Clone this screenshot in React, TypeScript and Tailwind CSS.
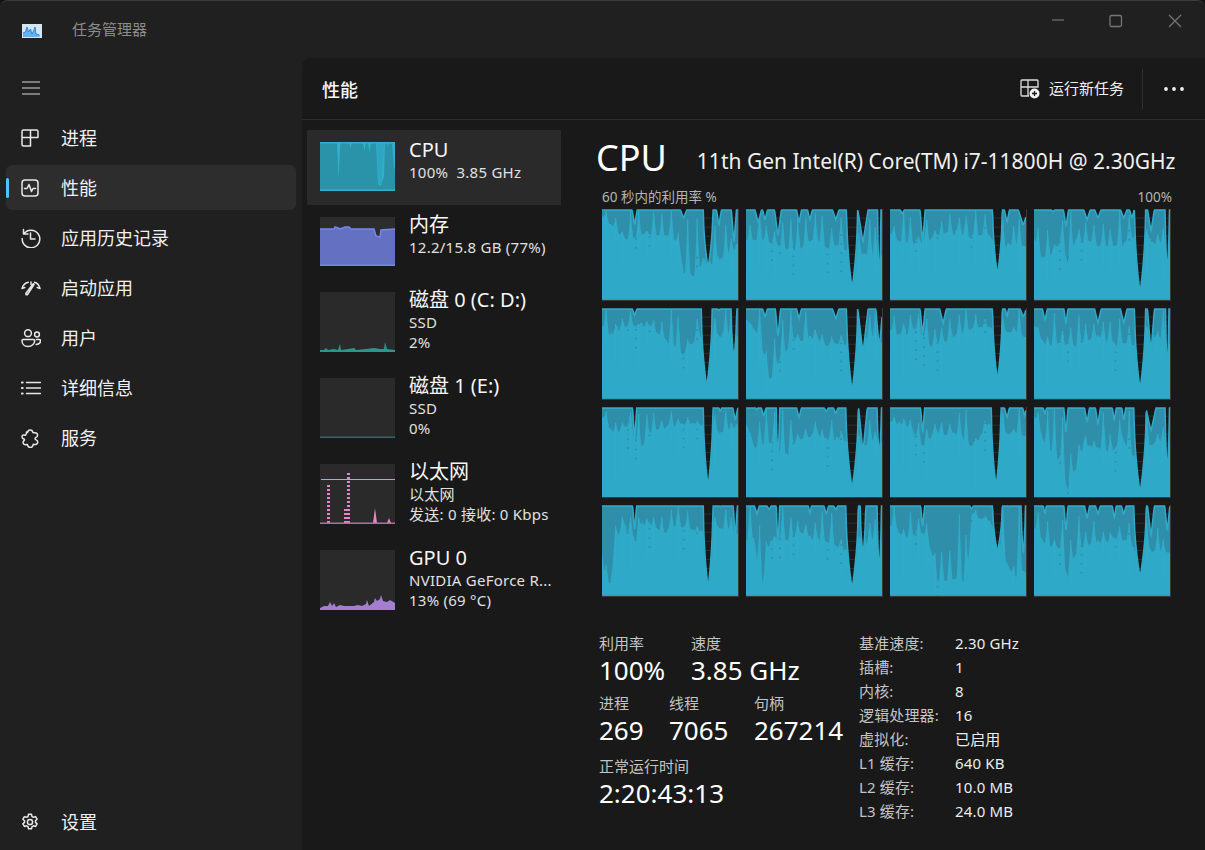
import React from "react";

type N = [number, number, number];
type P = [number, number];
type Core = { n: N[]; p: P[]; seed: number };

const cores: Core[] = [
  { seed: 1, n: [[0.24, 0.015, 0.18], [0.6, 0.02, 0.1], [0.78, 0.035, 0.65], [0.86, 0.015, 0.18], [0.97, 0.015, 0.38]], p: [[0, 0.08], [0.08, 0.2], [0.2, 0.35], [0.3, 0.28], [0.45, 0.3], [0.56, 0.35], [0.6, 0.7], [0.7, 0.75], [0.74, 0.55], [0.8, 0.6], [1, 0.4]] },
  { seed: 2, n: [[0.09, 0.02, 0.15], [0.14, 0.015, 0.12], [0.235, 0.02, 0.3], [0.39, 0.015, 0.15], [0.47, 0.015, 0.12], [0.66, 0.02, 0.12], [0.78, 0.04, 0.88], [0.86, 0.03, 0.37], [0.98, 0.012, 0.8]], p: [[0, 0.33], [0.1, 0.33], [0.25, 0.4], [0.35, 0.45], [0.5, 0.33], [0.6, 0.42], [0.7, 0.4], [0.8, 0.5], [1, 0.5]] },
  { seed: 3, n: [[0.09, 0.015, 0.05], [0.24, 0.015, 0.38], [0.79, 0.035, 0.73], [0.86, 0.015, 0.15], [0.98, 0.03, 0.18]], p: [[0, 0.25], [0.1, 0.4], [0.3, 0.32], [0.5, 0.25], [0.6, 0.3], [0.72, 0.28], [0.8, 0.4], [1, 0.4]] },
  { seed: 4, n: [[0.14, 0.015, 0.03], [0.235, 0.015, 0.2], [0.39, 0.02, 0.12], [0.47, 0.02, 0.1], [0.66, 0.02, 0.1], [0.72, 0.015, 0.1], [0.78, 0.04, 0.93], [0.86, 0.02, 0.25], [0.98, 0.015, 0.72]], p: [[0, 0.3], [0.06, 0.55], [0.1, 0.55], [0.2, 0.35], [0.25, 0.6], [0.3, 0.35], [0.5, 0.4], [0.65, 0.4], [0.72, 0.3], [0.85, 0.35], [1, 0.4]] },
  { seed: 5, n: [[0.24, 0.015, 0.08], [0.77, 0.04, 0.87], [0.86, 0.01, 0.03], [0.97, 0.02, 0.57]], p: [[0, 0.2], [0.07, 0.3], [0.15, 0.2], [0.3, 0.18], [0.36, 0.22], [0.6, 0.5], [0.72, 0.3], [0.85, 0.3], [1, 0.3]] },
  { seed: 6, n: [[0.14, 0.015, 0.1], [0.235, 0.015, 0.33], [0.39, 0.015, 0.12], [0.66, 0.02, 0.12], [0.78, 0.04, 0.92], [0.86, 0.03, 0.5], [0.98, 0.02, 0.45]], p: [[0, 0.12], [0.1, 0.3], [0.16, 0.75], [0.2, 0.8], [0.25, 0.55], [0.35, 0.35], [0.5, 0.32], [0.6, 0.42], [0.72, 0.4], [0.85, 0.3], [1, 0.4]] },
  { seed: 7, n: [[0.24, 0.015, 0.3], [0.39, 0.02, 0.17], [0.79, 0.035, 0.8], [0.86, 0.01, 0.1], [0.98, 0.02, 0.1]], p: [[0, 0.25], [0.08, 0.3], [0.2, 0.22], [0.3, 0.42], [0.4, 0.38], [0.5, 0.27], [0.7, 0.22], [0.85, 0.25], [1, 0.3]] },
  { seed: 8, n: [[0.08, 0.015, 0.14], [0.235, 0.012, 0.18], [0.47, 0.02, 0.17], [0.66, 0.02, 0.17], [0.78, 0.04, 0.9], [0.86, 0.02, 0.5], [0.98, 0.012, 0.7]], p: [[0, 0.2], [0.08, 0.4], [0.2, 0.38], [0.3, 0.42], [0.45, 0.3], [0.6, 0.4], [0.72, 0.4], [0.85, 0.3], [1, 0.4]] },
  { seed: 9, n: [[0.24, 0.012, 0.38], [0.78, 0.035, 0.88], [0.87, 0.01, 0.05], [0.98, 0.015, 0.15]], p: [[0, 0.12], [0.1, 0.3], [0.2, 0.2], [0.28, 0.48], [0.34, 0.3], [0.5, 0.2], [0.6, 0.2], [0.74, 0.2], [0.85, 0.28], [1, 0.2]] },
  { seed: 10, n: [[0.08, 0.01, 0.03], [0.13, 0.015, 0.1], [0.235, 0.012, 0.55], [0.39, 0.015, 0.12], [0.59, 0.015, 0.05], [0.66, 0.015, 0.07], [0.78, 0.045, 0.9], [0.86, 0.025, 0.5], [0.98, 0.015, 0.55]], p: [[0, 0.2], [0.06, 0.45], [0.2, 0.4], [0.28, 0.55], [0.36, 0.4], [0.5, 0.28], [0.58, 0.35], [0.7, 0.35], [0.85, 0.4], [1, 0.4]] },
  { seed: 11, n: [[0.24, 0.012, 0.3], [0.78, 0.035, 0.88], [0.86, 0.015, 0.12], [0.99, 0.012, 0.1]], p: [[0, 0.15], [0.15, 0.2], [0.24, 0.45], [0.32, 0.28], [0.4, 0.3], [0.5, 0.3], [0.6, 0.45], [0.72, 0.2], [0.85, 0.3], [1, 0.3]] },
  { seed: 12, n: [[0.08, 0.012, 0.07], [0.235, 0.012, 0.3], [0.39, 0.015, 0.17], [0.47, 0.015, 0.2], [0.59, 0.012, 0.15], [0.66, 0.012, 0.15], [0.78, 0.045, 0.95], [0.86, 0.03, 0.27], [0.98, 0.015, 0.73]], p: [[0, 0.1], [0.1, 0.45], [0.2, 0.6], [0.25, 0.92], [0.3, 0.7], [0.36, 0.42], [0.45, 0.45], [0.55, 0.5], [0.65, 0.35], [0.72, 0.55], [0.85, 0.4], [1, 0.4]] },
  { seed: 13, n: [[0.24, 0.012, 0.28], [0.78, 0.035, 0.92], [0.87, 0.012, 0.02], [0.98, 0.012, 0.38]], p: [[0, 0.5], [0.02, 0.82], [0.06, 0.85], [0.1, 0.4], [0.15, 0.2], [0.25, 0.4], [0.3, 0.2], [0.4, 0.25], [0.45, 0.32], [0.55, 0.22], [0.68, 0.3], [0.85, 0.25], [1, 0.3]] },
  { seed: 14, n: [[0.08, 0.015, 0.1], [0.17, 0.015, 0.05], [0.235, 0.01, 0.5], [0.47, 0.01, 0.1], [0.59, 0.015, 0.1], [0.66, 0.015, 0.05], [0.78, 0.045, 0.93], [0.86, 0.02, 0.55], [0.98, 0.015, 0.75]], p: [[0, 0.38], [0.06, 0.38], [0.1, 0.8], [0.12, 0.85], [0.18, 0.4], [0.3, 0.38], [0.4, 0.3], [0.55, 0.4], [0.65, 0.42], [0.72, 0.5], [0.85, 0.4], [1, 0.4]] },
  { seed: 15, n: [[0.24, 0.012, 0.25], [0.6, 0.012, 0.05], [0.79, 0.035, 0.52], [0.87, 0.01, 0.02], [0.98, 0.015, 0.55]], p: [[0, 0.2], [0.1, 0.35], [0.24, 0.3], [0.3, 0.5], [0.35, 0.85], [0.5, 0.8], [0.55, 0.85], [0.57, 0.8], [0.6, 0.1], [0.75, 0.2], [0.85, 0.6], [0.92, 0.85], [0.97, 0.7], [1, 0.75]] },
  { seed: 16, n: [[0.08, 0.01, 0.1], [0.235, 0.012, 0.3], [0.39, 0.015, 0.15], [0.47, 0.015, 0.1], [0.59, 0.012, 0.15], [0.66, 0.015, 0.1], [0.78, 0.045, 0.8], [0.86, 0.02, 0.35], [0.98, 0.015, 0.3]], p: [[0, 0.25], [0.1, 0.45], [0.2, 0.5], [0.25, 0.8], [0.3, 0.55], [0.42, 0.4], [0.5, 0.42], [0.62, 0.35], [0.75, 0.5], [0.85, 0.5], [1, 0.55]] },
];

const streaks = [0.03, 0.1, 0.15, 0.21, 0.27, 0.33, 0.38, 0.44, 0.51, 0.56, 0.63, 0.7, 0.83, 0.91, 0.95];
const dotted = [0.19, 0.25, 0.35, 0.6, 0.7];

function rnd(a: number, b: number) {
  const v = Math.sin(a * 127.1 + b * 311.7) * 43758.5453;
  return v - Math.floor(v);
}

function outer(c: Core, f: number) {
  let d = 0.012;
  for (const [x, w, depth] of c.n) {
    const hw = depth > 0.5 ? w : w * 1.3;
    const t = 1 - Math.abs(f - x) / hw;
    if (t > 0) d = Math.max(d, depth * (depth > 0.5 ? Math.pow(t, 0.5) : t));
  }
  return d;
}

function interp(p: P[], f: number) {
  for (let i = 1; i < p.length; i++) {
    if (f <= p[i][0]) {
      const [x0, y0] = p[i - 1];
      const [x1, y1] = p[i];
      return y0 + ((y1 - y0) * (f - x0)) / (x1 - x0);
    }
  }
  return p[p.length - 1][1];
}

function inner(c: Core, f: number) {
  let d = interp(c.p, f);
  d += (rnd(c.seed, Math.floor(f * 50)) - 0.5) * 0.05;
  let k = 1;
  streaks.forEach((s, i) => {
    const t = 1 - Math.abs(f - s) / 0.02;
    const amt = 0.15 + rnd(c.seed, i + 40) * 0.85;
    if (t > 0) k = Math.min(k, 1 - amt * t);
  });
  return Math.max(d * k, outer(c, f));
}

function CoreChart({ c }: { c: Core }) {
  const W = 137;
  const H = 91;
  const xs = Array.from({ length: W * 2 + 1 }, (_, i) => i / 2);
  const op = xs.map((x) => `${x},${(outer(c, x / W) * H).toFixed(1)}`).join(" ");
  const ip = xs.map((x) => `${x},${(inner(c, x / W) * H).toFixed(1)}`).join(" ");
  const grid = [1, 2, 3, 4, 5, 6, 7, 8, 9];
  return (
    <div className="h-full w-full border-b border-r border-[#3a3a3a]">
      <svg viewBox={`0 0 ${W} ${H}`} preserveAspectRatio="none" className="block h-full w-full">
        <rect width={W} height={H} fill="#181818" />
        {grid.map((g) => (
          <line key={g} x1="0" x2={W} y1={g * 9.1} y2={g * 9.1} stroke="#2e2e2e" strokeWidth="1" />
        ))}
        <polygon points={`0,${H} ${op} ${W},${H}`} fill="#2f8ea9" />
        <polygon points={`0,${H} ${ip} ${W},${H}`} fill="#2ea9c8" />
        {streaks.map((s, i) => {
          const x = s * W;
          const y = inner(c, s) * H;
          const end = Math.min(H - 4, y + 18 + rnd(c.seed, i) * 40);
          return <line key={i} x1={x} x2={x} y1={y} y2={end} stroke="#2fadcb" strokeWidth="1.200" />;
        })}
        {dotted.flatMap((s, i) => {
          const x = s * W;
          const base = Math.max(interp(c.p, s), outer(c, s)) * H;
          const count = Math.floor(1 + rnd(c.seed, i + 90) * 5);
          return Array.from({ length: count }, (_, j) => (
            <rect key={`${i}-${j}`} x={x - 1} y={base * 0.7 + j * 9} width="2" height="1.600" fill="#2f90ab" />
          ));
        })}
        <polyline points={op} fill="none" stroke="#2ea9c8" strokeWidth="1.600" />
      </svg>
    </div>
  );
}

const ico = { fill: "none", stroke: "#e8e8e8", strokeWidth: 1.5, strokeLinecap: "round" as const, strokeLinejoin: "round" as const };

const IconProc = () => (
  <svg width="18" height="18" viewBox="0 0 18 18" {...ico}>
    <path d="M2.500 1h13a1.500 1.500 0 0 1 1.500 1.500V8.500H9.500V17h-7A1.500 1.500 0 0 1 1 15.500v-13A1.500 1.500 0 0 1 2.500 1zM9.500 1v7.500M1 8.500h8.500" />
  </svg>
);
const IconPerf = () => (
  <svg width="18" height="18" viewBox="0 0 18 18" {...ico}>
    <rect x="1" y="1" width="16" height="16" rx="3" />
    <path d="M3.500 9.500h2.500l2-4 2.500 7 1.500-3h2.500" />
  </svg>
);
const IconHist = () => (
  <svg width="20" height="20" viewBox="0 0 20 20" {...ico}>
    <path d="M2.500 1.500v4.500h4.500M2.700 6a8.800 8.800 0 1 1-1.500 4.500" />
    <path d="M9.500 5v6h4.500" />
  </svg>
);
const IconStart = () => (
  <svg width="20" height="15" viewBox="0 0 20 15" {...ico}>
    <path d="M1 7.500C2 4 4.500 1.800 7.300 1.200M13.500 1.300c2.700.7 4.700 3 5.500 6.200M1 7.500l2.800-1M16.200 6.500l2.800 1" />
    <path d="M6.500 13.500c-.8 1-2.300-.2-1.500-1.300L12 3c.5-.6 1.300-.1 1 .6z" />
    <path d="M10 1v2.500" />
  </svg>
);
const IconUsers = () => (
  <svg width="20" height="19" viewBox="0 0 20 19" {...ico}>
    <circle cx="7" cy="4.200" r="3.400" />
    <circle cx="16" cy="5.500" r="2.400" />
    <path d="M2 10.500h10.500c.7 0 1.200.5 1.200 1.200 0 3.200-2.900 5.800-6.700 5.800S1 14.900 1 11.700c0-.7.400-1.200 1-1.200zM15.500 10.500h3c.7 0 1 .4 1 1 0 2-1.800 3.700-4.300 3.900" />
  </svg>
);
const IconList = () => (
  <svg width="20" height="14" viewBox="0 0 20 14" {...ico}>
    <path d="M5.500 1.500h14M5.500 7h14M5.500 12.500h14" />
    <path d="M1 1.500h.6M1 7h.6M1 12.500h.6" strokeWidth="2.200" />
  </svg>
);
const IconSvc = () => (
  <svg width="18" height="19" viewBox="0 0 18 19" {...ico}>
    <path d="M6.500 3.500C6.800 1.800 8 1 9.200 1s2.400.8 2.700 2.300c.1.400.4.600.8.500 1.800-.4 3.500.3 3.800 1.700.3 1.200-.5 2.500-1.800 3.100-.9.400-.9 1.600 0 2 1.400.6 2.300 1.900 1.900 3.200-.4 1.400-2 2-3.700 1.600-.4-.1-.7.100-.8.500-.3 1.500-1.500 2.600-2.800 2.600s-2.400-1-2.700-2.400c-.1-.4-.4-.6-.8-.5-1.700.4-3.200-.2-3.600-1.500-.3-1 .2-2 1-2.700.4-.3.400-.9 0-1.200C1.500 9.500 1 8.700 1 7.900c0-.8.500-1.600 1.300-1.800.5-.2 1-.1 1.400.1.500.2 1 0 1.200-.5.300-.6.500-1.500.6-2.700z" />
  </svg>
);
const IconGear = () => (
  <svg width="18" height="18" viewBox="0 0 18 18" {...ico}>
    <circle cx="9" cy="9" r="2.600" />
    <path d="M7.500 1.300h3l.5 2.200 1.500.8 2.100-.7 1.500 2.600-1.600 1.500v1.700l1.600 1.500-1.500 2.600-2.100-.7-1.500.8-.5 2.200h-3l-.5-2.200-1.500-.8-2.100.7-1.500-2.600 1.600-1.500V7.700L1.900 6.200l1.500-2.600 2.100.7 1.500-.8z" />
  </svg>
);

const nav: [string, React.ReactNode][] = [
  ["进程", <IconProc />],
  ["性能", <IconPerf />],
  ["应用历史记录", <IconHist />],
  ["启动应用", <IconStart />],
  ["用户", <IconUsers />],
  ["详细信息", <IconList />],
  ["服务", <IconSvc />],
];

function NavRow({ label, icon, active }: { label: string; icon: React.ReactNode; active?: boolean }) {
  return (
    <div className={`relative flex h-[45px] items-center rounded-md ${active ? "bg-[#2d2d2d]" : ""}`}>
      {active && <div className="absolute left-0 top-[13px] h-[20px] w-[3px] rounded-full bg-[#4cc2ff]" />}
      <div className="ml-[15px] mt-[1px] flex w-[34px] items-center">{icon}</div>
      <span className="ml-[6px] mt-[2px] text-[18px] text-[#f0f0f0]">{label}</span>
    </div>
  );
}

function Mini({ h, bg, children }: { h: number; bg: string; children: React.ReactNode }) {
  return (
    <svg width="75" height={h} viewBox={`0 0 75 ${h}`} className="block shrink-0" style={{ background: bg }}>
      {children}
    </svg>
  );
}

function pts(arr: P[], H: number) {
  return `0,${H} ` + arr.map((p) => p.join(",")).join(" ") + ` 75,${H}`;
}

const cpuMini = (
  <Mini h={49} bg="#2a2a2a">
    <polygon points="0,49 0,0 75,0 75,49" fill="#2a93aa" />
    <path d="M17 0l1.500 37 2-37zM29 0l1.500 6 1.500-6zM43 0l1.500 9 1.500-9zM48 0l1.500 11 1.500-11zM56 0l2 42 3 2 3-10 1-34zM67 0l1 6 1-6zM72 0l2 26 1 1V0z" fill="#2fb1cd" />
    <path d="M57 0l1.500 42 3 0 2-34 .5-8z" fill="#2fa6c0" />
    <rect x="0" y="0" width="75" height="1.500" fill="#2fb1cd" />
    <rect x="0" y="47.500" width="75" height="1.500" fill="#2fb1cd" />
  </Mini>
);

const memMini = (
  <Mini h={49} bg="#2c2c2c">
    <polygon points={pts([[0, 12], [14, 12], [15, 10], [18, 11], [20, 12], [25, 10], [29, 10], [31, 12], [54, 12], [56, 19], [60, 20], [61, 13], [75, 12]], 49)} fill="#6470c2" />
    <polyline points="0,12 14,12 15,10 18,11 20,12 25,10 29,10 31,12 54,12 56,19 60,20 61,13 75,12" fill="none" stroke="#7488ec" strokeWidth="1.500" />
    <rect x="0" y="47.500" width="75" height="1.500" fill="#7488ec" />
  </Mini>
);

const disk0 = (
  <Mini h={60} bg="#2a2a2a">
    <polygon points={pts([[0, 58], [4, 58], [6, 56], [8, 58], [14, 57], [18, 58], [20, 52], [21, 58], [28, 57], [34, 56], [36, 58], [46, 57], [54, 56], [60, 57], [64, 57], [65, 50], [67, 57], [75, 58]], 60)} fill="#27998c" />
    <rect x="0" y="59" width="75" height="1" fill="#27998c" />
  </Mini>
);

const disk1 = (
  <Mini h={60} bg="#2a2a2a">
    <rect x="0" y="58.500" width="75" height="1.500" fill="#1f6f68" />
  </Mini>
);

const dots = (x: number, top: number) =>
  Array.from({ length: Math.floor((58 - top) / 4) + 1 }, (_, i) => (
    <rect key={`${x}-${i}`} x={x} y={top + i * 4} width="3" height="2" fill="#ea83c8" />
  ));

const eth = (
  <Mini h={60} bg="#2a2a2a">
    <rect x="1" y="15" width="74" height="1" fill="#e68cc8" />
    {dots(7, 21)}
    {dots(27, 9)}
    {dots(24, 45)}
    <polygon points="53,59 55,44 57,59" fill="#ea83c8" />
    <polygon points="67,59 69,54 71,59" fill="#ea83c8" />
    <rect x="0" y="58.500" width="75" height="1.500" fill="#b56a9c" />
  </Mini>
);

const gpu = (
  <Mini h={60} bg="#2a2a2a">
    <polygon points={pts([[0, 58], [4, 56], [8, 56], [10, 52], [12, 56], [14, 53], [16, 57], [20, 55], [24, 56], [28, 56], [34, 56], [38, 55], [42, 56], [46, 54], [47, 50], [49, 56], [54, 52], [55, 48], [57, 51], [60, 49], [61, 45], [63, 51], [67, 52], [70, 50], [75, 53]], 60)} fill="#a47fcf" />
  </Mini>
);

const items: { chart: React.ReactNode; title: string; lines: string[]; h: string; active?: boolean }[] = [
  { chart: cpuMini, title: "CPU", lines: ["100%  3.85 GHz"], h: "h-[75px]", active: true },
  { chart: memMini, title: "内存", lines: ["12.2/15.8 GB (77%)"], h: "h-[75px]" },
  { chart: disk0, title: "磁盘 0 (C: D:)", lines: ["SSD", "2%"], h: "h-[86px]" },
  { chart: disk1, title: "磁盘 1 (E:)", lines: ["SSD", "0%"], h: "h-[86px]" },
  { chart: eth, title: "以太网", lines: ["以太网", "发送: 0 接收: 0 Kbps"], h: "h-[86px]" },
  { chart: gpu, title: "GPU 0", lines: ["NVIDIA GeForce R...", "13% (69 °C)"], h: "h-[86px]" },
];

function Stat({ label, value, w }: { label: string; value: string; w: string }) {
  return (
    <div className={w}>
      <div className="text-[15px] leading-[20px] text-[#c4c4c4]">{label}</div>
      <div className="text-[26px] leading-[34px] text-white">{value}</div>
    </div>
  );
}

const specs = [
  ["基准速度:", "2.30 GHz"],
  ["插槽:", "1"],
  ["内核:", "8"],
  ["逻辑处理器:", "16"],
  ["虚拟化:", "已启用"],
  ["L1 缓存:", "640 KB"],
  ["L2 缓存:", "10.0 MB"],
  ["L3 缓存:", "24.0 MB"],
];

export default function App() {
  return (
    <div
      className="h-[850px] w-[1205px] overflow-hidden bg-[#141414]"
      style={{ fontFamily: '"Noto Sans","Noto Sans CJK SC",sans-serif' }}
    >
      <div className="flex h-full flex-col rounded-t-[8px] border-t border-[#3c3c3c] bg-[#202020]">
        <header className="flex h-[57px] shrink-0 items-center">
          <svg width="20" height="14" viewBox="0 0 20 14" className="ml-[22px] mt-[3px]">
            <rect width="20" height="14" fill="#d3e6f4" />
            <path d="M1 13V9l2.500-1 1.500-5 1.500 5 2-3 1.500 5 1.500-3 1.500-4 1 7 3.500 1v2z" fill="#63b4ee" />
            <path d="M1 9l2.500-1 1.500-5 1.500 5 2-3 1.500 5 1.500-3 1.500-4 1 7 3.500 1" fill="none" stroke="#2374c4" strokeWidth="0.800" />
          </svg>
          <span className="ml-[30px] text-[15px] text-[#8c8c8c]">任务管理器</span>
          <div className="ml-auto flex h-full items-start">
            <svg width="58" height="40" viewBox="0 0 58 40" stroke="#767676" fill="none" strokeWidth="1.200">
              <path d="M23 19h12" />
            </svg>
            <svg width="58" height="40" viewBox="0 0 58 40" stroke="#767676" fill="none" strokeWidth="1.300">
              <rect x="23" y="14.500" width="11.500" height="11" rx="1.500" />
            </svg>
            <svg width="60" height="40" viewBox="0 0 60 40" stroke="#767676" fill="none" strokeWidth="1.200">
              <path d="M24 14l12 12M36 14l-12 12" />
            </svg>
          </div>
        </header>

        <div className="flex min-h-0 flex-1">
          <aside className="flex w-[302px] shrink-0 flex-col px-[6px] pb-[6px] pt-[7px]">
            <div className="flex h-[45px] shrink-0 items-center pl-[16px]">
              <svg width="18" height="14" viewBox="0 0 18 14" stroke="#d8d8d8" strokeWidth="1.200">
                <path d="M0 1h18M0 7h18M0 13h18" />
              </svg>
            </div>
            <nav className="mt-[5px] flex flex-col gap-[5px]">
              {nav.map(([l, i]) => (
                <NavRow key={l} label={l} icon={i} active={l === "性能"} />
              ))}
            </nav>
            <div className="mt-auto">
              <NavRow label="设置" icon={<IconGear />} />
            </div>
          </aside>

          <main className="flex min-w-0 flex-1 flex-col rounded-tl-[8px] bg-[#191919]">
            <div className="flex h-[62px] shrink-0 items-center border-b border-[#2e2e2e] pl-[20px]">
              <h1 className="mt-[3px] text-[18px] font-medium text-[#f6f6f6]">性能</h1>
              <div className="ml-auto flex items-center">
                <svg width="20" height="20" viewBox="0 0 20 20" fill="none" stroke="#dcdcdc" strokeWidth="1.300">
                  <path d="M2 1h6v7H1V2a1 1 0 0 1 1-1zM8 1h9a1 1 0 0 1 1 1v6H8M1 8v8a1 1 0 0 0 1 1h7M8 8v9" />
                  <circle cx="14.500" cy="14.500" r="5" fill="#f2f2f2" stroke="none" />
                  <path d="M14.500 12v5M12 14.500h5" stroke="#191919" strokeWidth="1.300" />
                </svg>
                <span className="ml-[9px] text-[15px] text-[#f0f0f0]">运行新任务</span>
                <div className="ml-[18px] h-[40px] w-px bg-[#303030]" />
                <svg width="20" height="4" viewBox="0 0 20 4" fill="#f0f0f0" className="ml-[21px] mr-[21px]">
                  <circle cx="2" cy="2" r="1.900" />
                  <circle cx="10" cy="2" r="1.900" />
                  <circle cx="18" cy="2" r="1.900" />
                </svg>
              </div>
            </div>

            <div className="flex min-h-0 flex-1">
              <div className="ml-[5px] mt-[10px] flex w-[254px] shrink-0 flex-col">
                {items.map((it) => (
                  <div
                    key={it.title}
                    className={`flex ${it.h} pl-[13px] pt-[12px] ${it.active ? "bg-[#2a2a2a]" : ""}`}
                  >
                    {it.chart}
                    <div className="-mt-[5px] ml-[14px] whitespace-nowrap">
                      <div className="text-[20px] leading-[25px] text-[#f6f6f6]">{it.title}</div>
                      {it.lines.map((l) => (
                        <div key={l} className="whitespace-pre text-[15px] leading-[20px] tracking-[0.25px] text-[#e0e0e0]">
                          {l}
                        </div>
                      ))}
                    </div>
                  </div>
                ))}
              </div>

              <div className="ml-[35px] flex min-w-0 flex-1 flex-col pr-[30px]">
                <div className="flex h-[64px] items-center whitespace-nowrap pt-[12px]">
                  <span className="text-[36px] text-white">CPU</span>
                  <span className="ml-[30px] mt-[8px] text-[21px] text-[#f0f0f0]">
                    11th Gen Intel(R) Core(TM) i7-11800H @ 2.30GHz
                  </span>
                </div>
                <div className="ml-[6px] mt-[3px] flex h-[20px] items-center justify-between pr-[3px] text-[13.500px] text-[#b4b4b4]">
                  <span>60 秒内的利用率 %</span>
                  <span>100%</span>
                </div>
                <div className="ml-[6px] mt-[2px] grid h-[388px] w-[569px] grid-cols-4 grid-rows-4 gap-x-[7px] gap-y-[7px]">
                  {cores.map((c) => (
                    <CoreChart key={c.seed} c={c} />
                  ))}
                </div>
                <div className="ml-[3px] mt-[36px] flex">
                  <div className="flex w-[260px] shrink-0 flex-col">
                    <div className="flex">
                      <Stat label="利用率" value="100%" w="w-[92px]" />
                      <Stat label="速度" value="3.85 GHz" w="w-[150px]" />
                    </div>
                    <div className="mt-[6px] flex whitespace-nowrap">
                      <Stat label="进程" value="269" w="w-[70px]" />
                      <Stat label="线程" value="7065" w="w-[85px]" />
                      <Stat label="句柄" value="267214" w="w-[100px]" />
                    </div>
                    <div className="mt-[9px]">
                      <Stat label="正常运行时间" value="2:20:43:13" w="w-[200px]" />
                    </div>
                  </div>
                  <div className="-mt-[2px] grid grid-cols-[96px_1fr] text-[15px] leading-[24px] tracking-[0.15px]">
                    {specs.map(([k, v]) => (
                      <React.Fragment key={k}>
                        <span className="text-[#c4c4c4]">{k}</span>
                        <span className="text-[#ececec]">{v}</span>
                      </React.Fragment>
                    ))}
                  </div>
                </div>
              </div>
            </div>
          </main>
        </div>
      </div>
    </div>
  );
}
